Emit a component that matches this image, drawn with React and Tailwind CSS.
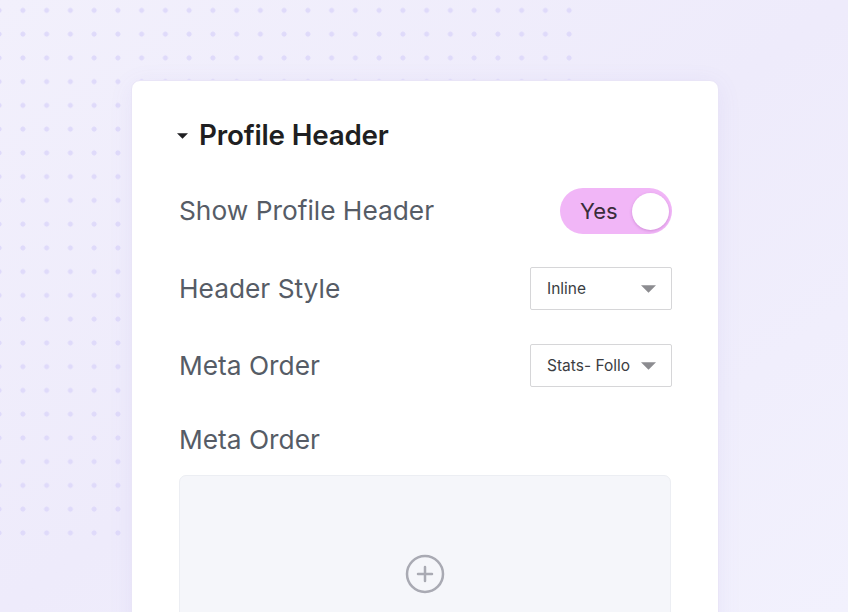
import React from "react";

function Caret({ className }) {
  return (
    <svg viewBox="0 0 12 6" className={className} fill="currentColor">
      <path d="M0 0h12L6 6z" />
    </svg>
  );
}

function Select({ value }) {
  return (
    <div className="w-[142px] h-[43px] border border-[#d6d6d8] rounded-[2px] bg-white flex items-center justify-between pl-[16px] pr-[15px]">
      <span className="text-[15.5px] text-[#3b3d42]">{value}</span>
      <Caret className="w-[15px] h-[8px] text-[#8c8c90]" />
    </div>
  );
}

function Row({ label, children, className = "" }) {
  return (
    <div className={`flex items-center justify-between ${className}`}>
      <span className="text-[26.3px] leading-[32px] text-[#565c66]">{label}</span>
      {children}
    </div>
  );
}

export default function App() {
  return (
    <div
      className="relative w-full h-[612px] overflow-hidden bg-gradient-to-br from-[#f2f0fc] via-[#eeebfb] to-[#f2f1fd]"
      style={{ fontFamily: "Inter, 'Noto Sans', sans-serif" }}
    >
      <div className="absolute left-0 top-0 w-[584px] h-[548px] bg-[radial-gradient(circle,#dfdafa_2.3px,transparent_2.8px)] bg-[length:23.75px_23.75px] bg-[position:11px_-1.5px]" />

      <div className="relative ml-[131px] mt-[80px] w-[588px] h-[600px] bg-white rounded-[9px] border border-[#e9e5f7] shadow-[0_4px_24px_rgba(120,100,200,0.08)] pt-[38px] pl-[47px] pr-[46px]">
        <div className="flex items-center gap-[11px] -ml-[2px]">
          <Caret className="w-[11px] h-[6px] text-[#1f1f22]" />
          <h2 className="text-[27.8px] leading-[33px] font-semibold text-[#1f1f22] tracking-[-0.2px]">
            Profile Header
          </h2>
        </div>

        <Row label="Show Profile Header" className="mt-[36px] h-[46px]">
          <div className="w-[112px] h-[46px] rounded-full bg-[#f1b6f7] flex items-center justify-between pl-[20px] pr-[3px]">
            <span className="text-[22px] text-[#3a2d3a]">Yes</span>
            <div className="w-[37px] h-[37px] rounded-full bg-white shadow-[0_1px_3px_rgba(150,60,160,0.35)]" />
          </div>
        </Row>

        <Row label="Header Style" className="mt-[33px] h-[43px]">
          <Select value="Inline" />
        </Row>

        <Row label="Meta Order" className="mt-[34px] h-[43px]">
          <Select value="Stats- Follo" />
        </Row>

        <div className="mt-[37px] text-[26.3px] leading-[32px] text-[#565c66]">Meta Order</div>

        <div className="mt-[19px] w-[492px] h-[200px] rounded-[7px] bg-[#f5f6fa] border border-[#eceef3] flex justify-center pt-[78px]">
          <svg viewBox="0 0 40 40" className="w-[40px] h-[40px]" fill="none" stroke="#a9aab3" strokeWidth="2.5" strokeLinecap="round">
            <circle cx="20" cy="20" r="18" />
            <path d="M20 13v14M13 20h14" />
          </svg>
        </div>
      </div>
    </div>
  );
}
